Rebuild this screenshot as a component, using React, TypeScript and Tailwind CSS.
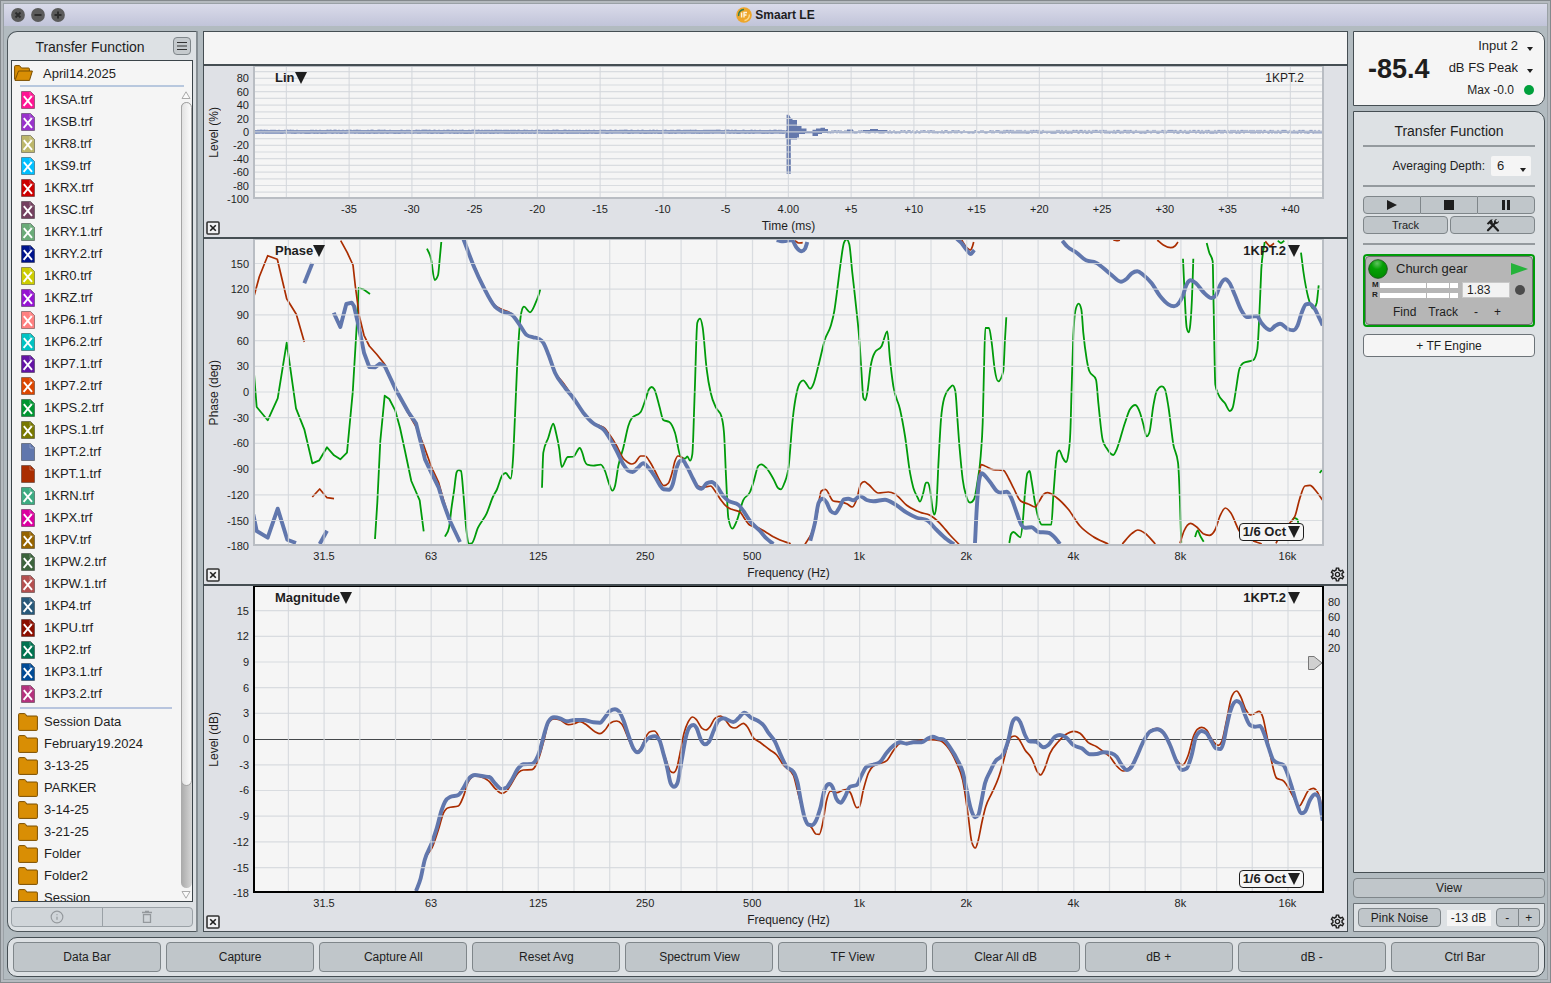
import type { ReactNode } from "react";
import { Info } from "lucide-react";
import { MdOutlineSettings } from "react-icons/md";

/* ---------- geometry of the traces ---------- */

type Part = [number, number, string];

/** Flattens tiles of samples (three units per plot unit) into plot points. */
function samples(parts: Part[]): [number, number][] {
  return parts.flatMap(([ox, oy, pts]) =>
    pts
      .trim()
      .split(/\s+/)
      .map((pair): [number, number] => {
        const [x, y] = pair.split(",").map(Number);
        return [ox + x / 3, oy + y / 3];
      }),
  );
}

/** Straight segments, for the widely spaced low-frequency bins. */
function straight(...parts: Part[]): string {
  return "M" + samples(parts).map(([x, y]) => `${x.toFixed(1)} ${y.toFixed(1)}`).join("L");
}

/** Monotone cubic through the samples: smooth, without overshoot. */
function curve(...parts: Part[]): string {
  const p = samples(parts);
  const n = p.length;
  const slope = (i: number) => (p[i + 1][1] - p[i][1]) / (p[i + 1][0] - p[i][0] || 0.01);
  const tangent = p.map((_, i) => {
    if (i === 0) return slope(0);
    if (i === n - 1) return slope(n - 2);
    const h0 = p[i][0] - p[i - 1][0];
    const h1 = p[i + 1][0] - p[i][0];
    const s0 = slope(i - 1);
    const s1 = slope(i);
    const mean = (s0 * h1 + s1 * h0) / (h0 + h1);
    return (Math.sign(s0) + Math.sign(s1)) * Math.min(Math.abs(s0), Math.abs(s1), 0.5 * Math.abs(mean)) || 0;
  });
  let d = `M${p[0][0].toFixed(1)} ${p[0][1].toFixed(1)}`;
  for (let i = 0; i < n - 1; i++) {
    const dx = (p[i + 1][0] - p[i][0]) / 3;
    d += `C${(p[i][0] + dx).toFixed(1)} ${(p[i][1] + dx * tangent[i]).toFixed(1)} ${(p[i + 1][0] - dx).toFixed(1)} ${(p[i + 1][1] - dx * tangent[i + 1]).toFixed(1)} ${p[i + 1][0].toFixed(1)} ${p[i + 1][1].toFixed(1)}`;
  }
  return d;
}

const P1 = (s: string): Part => [250, 236, s];
const P2 = (s: string): Part => [600, 236, s];
const P3 = (s: string): Part => [960, 236, s];
const M1 = (s: string): Part => [250, 660, s];
const M2 = (s: string): Part => [610, 660, s];
const M3 = (s: string): Part => [960, 580, s];

const phaseGreen = [
  straight(P1("11,400 15,450 20,513 53,553 83,487 110,320 138,517 163,580 187,682 208,673 231,634 252,658 271,670 291,650 308,470 320,270 326,156 340,160 360,174")),
  straight(P1("375,909 382,800 391,615 404,479 418,489 436,524 450,575 465,645 484,735 509,793 521,886")),
  curve(P1("531,38 543,68 554,132 564,118 570,60 574,18")),
  curve(P1("585,902 597,875 604,820 612,765 620,708 626,702 633,705 640,770 649,880 656,923 665,922 684,875 710,832 730,780 740,762 757,718 767,711 782,728 789,670 795,540 801,400 809,270 815,225 822,212 840,229 857,200 865,180 871,160")),
  curve(
    P1("876,755 880,650 895,605 910,563 918,590 928,640 935,693 953,663 970,662 989,636 997,650 1004,675 1012,686 1030,689"),
    P2("2,686 15,705 28,745 37,764 45,750 55,690 70,635 85,570 95,547 122,528 135,495 147,460 155,453 163,460 178,510 190,552 208,558 225,590 242,662 255,668 262,661 270,674 277,655 284,470 292,260 300,248 308,275 320,400 332,470 348,515 364,540 372,590 378,720 385,845 397,878 410,855 430,792 450,768 460,740 475,690 484,685 500,697 520,728 535,757 543,760 553,742 566,690 578,550 590,470 600,440 610,433 620,445 630,458 640,445 655,390 675,310 692,270 703,225 712,160 722,80 732,20 740,10 748,25 757,110 768,210 778,310 784,400 790,485 796,493 802,470 812,390 824,350 845,330 862,286 870,370 880,450 900,520 915,600 930,710 940,755 953,785 960,797 970,770 978,740 984,740 990,760 998,820 1003,836 1009,810 1015,690 1023,550 1033,485 1050,455 1058,448 1066,465 1073,560"),
    P3("0,650 8,730 18,778 30,800 42,790 52,740 62,660 68,560 72,400 76,276 87,276 95,320 104,400 115,436 130,405 135,310 139,244"),
  ),
  curve(P3("148,921 153,895 160,888 181,904 189,850 195,770 202,712 209,705 214,730 225,800 235,845 246,866 274,866 280,780 286,700 292,650 298,643 308,665 318,678 325,655 331,590 335,450 340,300 346,225 356,203 364,220 370,290 380,370 388,405 408,431 415,500 428,612 440,637 460,657 470,640 495,560 510,520 526,507 540,530 550,565 560,601 568,590 580,510 590,465 606,451 615,460 625,510 640,625 654,680 660,800 663,900 664,920")),
  curve(P3("669,68 674,180 680,275 686,289 691,265 697,160 700,68")),
  curve(P3("740,21 748,50 758,76 761,220 766,445 775,475 795,502 810,525 818,515 828,460 838,400 850,381 880,372 892,340 898,240 904,100 914,18")),
  curve(P3("953,14 963,21 973,14")),
  curve(P3("1023,50 1030,105 1045,185 1060,218 1070,200 1076,148")),
  curve(P3("705,903 713,883 720,898 731,917")),
  curve(P3("995,856 1003,846 1012,850 1015,860")),
  straight(P3("1079,711 1086,702")),
];

const phaseRed = [
  straight(P1("10,188 28,122 53,59 82,70 110,188 139,235 163,318")),
  straight(P1("187,783 209,759 231,785 252,788")),
  straight(P1("272,14 292,50 309,87 316,150 328,240 342,298 358,330 380,355 404,385 436,460 475,532 498,572 520,625 545,695 566,740 580,790 600,855 630,915")),
  curve(
    P1("640,10 672,88 700,150 735,208 755,220 785,234 810,268 830,297 850,304 865,308 880,320 895,355 915,408 940,441 970,485 1000,530 1030,562"),
    P2("0,569 12,575 28,595 50,630 68,665 82,678 95,684 105,680 122,660 135,660 150,678 165,705 180,735 192,749 205,742 215,715 225,675 234,660 243,662 260,690 280,730 295,750 310,754 332,750 345,765 365,795 380,812 395,820 420,828 435,850 450,868 475,875 500,890 520,902 540,912 572,923"),
  ),
  curve(P2("615,925 635,890 650,840 664,765 676,760 700,795 720,798 740,803 757,813 770,790 782,745 793,737 805,745 835,771 865,768 885,774 920,808 960,829 990,838 1020,862 1050,897 1077,925")),
  curve(P2("585,14 596,21 608,20")),
  curve(P3("5,12 20,35 30,42 37,32 41,18")),
  curve(P3("460,12 470,14 480,12")),
  curve(P3("592,12 610,27 632,35 645,30 654,18")),
  curve(P3("916,16 930,30 942,22")),
  curve(P3("45,905 55,760 63,686 75,690 100,701 130,703 145,725 160,755 182,795 205,804 225,813 238,795 250,776 262,770 290,785 325,820 360,870 400,902 445,924")),
  curve(P3("487,924 515,893 533,882 555,892 586,924")),
  curve(P3("660,922 672,885 692,862 710,873 730,893 748,898 765,882 780,840 796,816 812,830 838,885 870,910 905,924")),
  curve(P3("948,922 970,880 990,860 1005,840 1020,785 1035,750 1050,748 1068,765 1088,793")),
];

const phaseBlue = [
  straight(P1("10,835 20,885 53,905 83,818 112,911 138,921")),
  straight(P1("209,924 231,884")),
  straight(P1("163,142 187,82")),
  straight(P1("251,230 271,273 289,204 305,200 312,210 328,280 342,350 358,393 375,394 390,383 404,390 436,458 475,528 498,562 510,610 525,670 545,712 566,755 580,800 600,855 630,918")),
  curve(
    P1("640,8 672,92 700,152 735,212 755,226 785,236 810,268 830,297 850,304 865,308 880,320 895,355 915,410 945,455 970,486 1000,530 1030,562"),
    P2("0,573 10,580 28,605 50,645 70,685 85,704 98,708 112,697 130,682 145,695 165,722 180,748 190,760 208,761 218,745 230,695 240,675 248,673 260,690 280,730 295,755 305,758 320,742 335,738 350,750 370,780 385,794 415,806 435,832 450,855 480,885 500,908 520,924"),
  ),
  curve(P2("631,914 645,860 656,800 668,788 680,800 692,825 705,832 718,815 732,790 745,788 760,793 780,780 800,792 820,796 855,791 885,805 920,830 950,845 980,852 1010,882 1040,910 1062,925")),
  curve(P2("530,12 545,16 560,14 575,12 590,35 605,46 615,38 622,18")),
  curve(P3("-10,8 5,22 20,42 32,54 43,42")),
  curve(P3("45,921 50,820 58,730 65,712 80,725 95,745 110,765 122,770 140,767 152,782 170,830 185,868 195,875 215,874 235,888 265,890 280,900 300,924")),
  curve(P3("307,14 320,30 350,50 378,73 408,80 450,113 483,137 500,128 515,112 532,106 550,117 575,142 600,180 625,205 642,211 655,203 668,180 680,145 692,133 708,142 730,168 755,186 768,178 780,148 796,130 808,140 825,178 845,225 860,243 890,240 905,262 930,282 945,270 960,263 985,280 1000,283 1012,270 1025,230 1038,205 1048,203 1062,215 1075,240 1088,268")),
];

const magRed = [
  curve(
    M1("498,693 512,655 524,602 547,562 565,510 580,460 595,443 625,438 640,410 655,365 675,348 700,353 715,362 735,385 755,400 770,393 785,370 805,338 820,330 845,329 858,315 868,290 882,240 895,190 912,177 930,180 955,194 970,192 990,185 1010,195 1035,215 1050,221 1065,210 1080,190"),
    M2("20,183 35,192 55,235 70,268 82,274 95,260 108,230 120,215 132,213 145,228 158,270 170,305 180,332 190,338 200,325 210,280 222,220 235,185 248,171 260,180 275,204 288,210 300,200 315,175 332,168 345,178 362,200 375,204 400,190 412,200 430,233 450,247 480,270 500,285 520,315 550,345 563,395 575,440 585,480 605,503 618,522 628,523 638,490 650,420 662,393 680,398 700,390 712,388 722,400 740,443 748,440 760,390 775,340 790,318 812,310 830,302 850,272 870,250 900,247 930,241 960,239 990,242 1010,258 1040,310 1058,360 1075,470 1085,545"),
    M3("46,804 55,780 65,730 77,680 95,640 115,595 130,545 145,490 155,470 165,468 175,475 195,510 215,535 232,575 242,585 252,570 270,520 295,485 315,465 342,454 360,460 385,488 410,500 430,515 450,530 470,558 490,573 500,570 515,555 530,530 550,485 570,452 590,445 610,458 630,495 650,540 668,555 685,525 700,470 712,448 725,442 740,450 755,478 775,496 785,485 800,420 815,350 830,333 842,350 858,390 872,405 885,400 897,394 908,410 920,465 935,545 950,595 970,602 980,615 1000,650 1018,678 1030,660 1045,632 1060,625 1072,635 1083,670 1088,715"),
  ),
];

const magBlue = [
  curve(
    M1("498,693 512,655 524,600 545,550 560,505 575,450 585,425 600,411 625,405 640,385 655,358 675,345 700,349 718,351 735,370 755,387 770,382 785,360 805,325 820,313 845,312 858,300 870,270 882,225 895,185 912,172 930,175 950,184 975,180 1000,180 1030,187 1050,188 1065,172 1080,153"),
    M2("15,148 25,152 40,180 55,225 70,265 82,277 92,270 105,245 120,232 135,229 148,240 160,280 172,325 182,370 192,380 202,370 215,300 228,230 240,200 250,195 260,205 272,238 285,253 297,245 312,210 325,182 340,175 370,186 385,175 403,158 425,174 445,183 460,195 475,218 495,245 510,280 530,320 550,335 563,370 572,420 583,470 595,494 605,496 618,482 632,440 645,385 658,372 668,382 680,418 692,428 705,410 720,380 740,375 755,345 770,320 790,314 810,306 830,278 850,257 870,247 890,251 910,247 935,247 955,235 968,230 985,236 1000,238 1020,262 1045,305 1058,335 1070,390 1082,445"),
    M3("45,712 55,705 62,675 75,610 90,575 105,545 130,522 145,480 158,425 168,415 180,425 195,465 208,484 228,485 250,502 265,495 285,470 300,465 318,472 340,495 365,505 390,523 410,522 430,517 455,520 470,530 485,555 500,570 515,560 530,530 550,485 570,455 592,448 610,458 630,495 650,545 665,570 680,565 695,525 708,470 725,453 740,460 755,485 768,505 782,507 790,490 800,440 812,390 830,363 842,370 855,405 870,435 885,440 900,438 910,455 925,500 940,540 955,550 970,555 980,575 995,620 1010,670 1025,700 1035,695 1050,660 1065,643 1075,650 1083,690 1088,722"),
  ),
];

/** Noise floor of the impulse response as a run of vertical bars. */
function noiseFloor(from: number, to: number, base: number, jitter: number): string {
  let seed = 7;
  let d = "";
  for (let x = from; x < to; x += 1) {
    seed = (seed * 48271) % 2147483647;
    const r = seed / 2147483647;
    const up = base + (r > 0.6 ? jitter : 0);
    const down = base + (r < 0.35 ? jitter : 0);
    d += `M${x} ${131.8 - up}V${131.8 + down}`;
  }
  return d;
}

/* ---------- axes ---------- */

const LEFT = 253;
const WIDTH = 1071;

type Tick = { at: number; text: string };

const range = (n: number) => Array.from({ length: n }, (_, i) => i);

const freqTicks: Tick[] = ["31.5", "63", "125", "250", "500", "1k", "2k", "4k", "8k", "16k"].map((text, i) => ({
  text,
  at: 324 + i * 107.05,
}));
const freqGrid = range(29).map((i) => 288.4 + i * 35.7);

const timeTicks: Tick[] = range(16).map((i) => {
  const ms = (i - 7) * 5;
  return { text: ms === 0 ? "4.00" : ms > 0 ? `+${ms}` : `${ms}`, at: 788.3 + (i - 7) * 62.75 };
});
const timeGrid = range(17).map((i) => 286.4 + i * 62.75);

const linTicks: Tick[] = range(10).map((i) => ({ text: `${80 - i * 20}`, at: 78.3 + i * 13.4 }));
const linGrid = range(19).map((i) => 71.6 + i * 6.7);

const phaseTicks: Tick[] = range(12).map((i) => ({ text: `${150 - i * 30}`, at: 263.5 + i * 25.7 }));
const phaseGrid = range(11).map((i) => 263.5 + i * 25.7);

const magTicks: Tick[] = range(12).map((i) => ({ text: `${15 - i * 3}`, at: 610.5 + i * 25.7 }));
const magGrid = range(11)
  .filter((i) => i !== 5)
  .map((i) => 610.6 + i * 25.7);
const cohTicks: Tick[] = range(4).map((i) => ({ text: `${80 - i * 20}`, at: 602 + i * 15.4 }));

/* ---------- small pieces ---------- */

const Down = ({ className }: { className: string }) => (
  <svg viewBox="0 0 11 11" preserveAspectRatio="none" className={className} aria-hidden="true">
    <path d="M0 0H11L5.5 11Z" fill="#1e1e1e" />
  </svg>
);

const CloseBox = () => (
  <svg viewBox="0 0 14 14" className="size-3.5" aria-hidden="true">
    <rect x="1" y="1" width="12" height="12" rx="1" fill="#f0f0f2" stroke="#333" strokeWidth="1.6" />
    <path d="M4.2 4.2l5.6 5.6M9.8 4.2l-5.6 5.6" stroke="#1e1e1e" strokeWidth="1.6" />
  </svg>
);

const FileIcon = ({ color, plain }: { color: string; plain?: boolean }) => (
  <svg viewBox="0 0 14 18" className="h-[18px] w-3.5 shrink-0" aria-hidden="true">
    <path d="M.5 .5H9.5L13.500 4.500V17.500H.5Z" fill={color} stroke="#000" strokeOpacity=".35" />
    <path d="M9 1V5H13" fill={color} stroke="#fff" strokeOpacity=".35" strokeWidth=".8" />
    {!plain && <path d="M2.800 5.200L11 14.800M10.800 5.200L2.600 14.800" stroke="#fff" strokeWidth="1.900" />}
  </svg>
);

const FolderIcon = () => (
  <svg viewBox="0 0 20 18" className="h-[18px] w-5 shrink-0" aria-hidden="true">
    <path
      d="M.6 1.500Q.6.600 1.500.600H6.500Q7.400.600 7.800 1.500L8.600 3H18.500Q19.400 3 19.400 4V16.500Q19.400 17.400 18.500 17.400H1.500Q.6 17.400.6 16.500Z"
      fill="#d98e04"
      stroke="#7a4e00"
      strokeWidth="1"
    />
  </svg>
);

const OpenFolderIcon = () => (
  <svg viewBox="0 0 19 16" className="h-4 w-[19px] shrink-0" aria-hidden="true">
    <path d="M.6 14.500V1.500Q.6.600 1.500.600H5.500L7.500 3H14.500Q15.400 3 15.400 4V6" fill="#d98e04" stroke="#7a4e00" />
    <path d="M4.500 6H18.400L15.500 15.400H1Z" fill="#d98e04" stroke="#7a4e00" strokeLinejoin="round" />
  </svg>
);

const flatButton = "flex items-center justify-center border border-[#7f868a] bg-[#c0c6ca] text-[#1e1e1e]";

/* ---------- charts ---------- */

type ChartProps = {
  top: number;
  height: number;
  grow: string;
  yTitle: string;
  xTitle: string;
  yTicks: Tick[];
  xTicks: Tick[];
  xGrid: number[];
  yGrid: number[];
  frame: string;
  title: string;
  trace: ReactNode;
  source?: boolean;
  settings?: boolean;
  rightTicks?: Tick[];
  children: ReactNode;
};

function Chart(c: ChartProps) {
  return (
    <section aria-label={c.title} className={`grid min-h-0 grid-cols-[49px_minmax(0,1fr)_23px] grid-rows-[minmax(0,1fr)_38px] bg-[#dfe1e6] ${c.grow}`}>
      <div className="relative flex items-center pl-1">
        <span className="rotate-180 text-xs leading-3 [writing-mode:vertical-rl]">{c.yTitle}</span>
        {c.yTicks.map((t) => (
          <span key={t.text} className="absolute right-1 -translate-y-1/2 text-[11px] leading-3" style={{ top: `${((t.at - c.top) / c.height) * 100}%` }}>
            {t.text}
          </span>
        ))}
      </div>
      <div className="relative min-w-0 bg-[#f5f5f5]">
        <svg viewBox={`${LEFT} ${c.top} ${WIDTH} ${c.height}`} preserveAspectRatio="none" className="absolute inset-0 size-full" aria-hidden="true">
          {c.children}
          <g stroke="#d3d7dc" strokeOpacity=".85" strokeWidth="1.200">
            {c.xGrid.map((x) => (
              <path key={x} d={`M${x} ${c.top}v${c.height}`} />
            ))}
            {c.yGrid.map((y) => (
              <path key={y} d={`M${LEFT} ${y}h${WIDTH}`} />
            ))}
          </g>
        </svg>
        <div className={`pointer-events-none absolute inset-0 border-2 border-t ${c.frame}`} />
        <button type="button" className="absolute top-1 left-[22px] flex h-4 items-center text-[13px] font-bold">
          {c.title}
          <Down className="size-3" />
        </button>
        <div className="absolute top-1 right-5 flex h-4 items-center">{c.trace}</div>
        {c.source && (
          <button type="button" className="absolute right-5 bottom-[5px] flex h-[18px] items-center rounded border border-[#1e1e1e] bg-[#f5f5f5] px-[3px] text-[13px] font-bold">
            1/6 Oct
            <Down className="ml-0.5 size-3" />
          </button>
        )}
        {c.rightTicks && (
          <svg viewBox="0 0 15 14" className="absolute top-[70px] right-px h-3.5 w-[15px]" aria-hidden="true">
            <path d="M.5 .5H6L14 7L6 13.500H.5Z" fill="#d0d0d0" stroke="#777" />
          </svg>
        )}
      </div>
      <div className="relative">
        {c.rightTicks?.map((t) => (
          <span key={t.text} className="absolute left-1 -translate-y-1/2 text-[11px] leading-3" style={{ top: `${((t.at - c.top) / c.height) * 100}%` }}>
            {t.text}
          </span>
        ))}
      </div>
      <div className="flex items-end pb-0.5 pl-0.5">
        <button type="button" aria-label={`Close ${c.title}`}>
          <CloseBox />
        </button>
      </div>
      <div className="relative flex justify-center pt-[19px]">
        {c.xTicks.map((t) => (
          <span key={t.text} className="absolute top-1 -translate-x-1/2 text-[11px] leading-3" style={{ left: `${((t.at - LEFT) / WIDTH) * 100}%` }}>
            {t.text}
          </span>
        ))}
        <span className="text-xs">{c.xTitle}</span>
      </div>
      <div className="flex items-end justify-end pr-px pb-px">
        {c.settings && (
          <button type="button" aria-label={`${c.title} settings`}>
            <MdOutlineSettings className="size-[17px]" />
          </button>
        )}
      </div>
    </section>
  );
}

const Lines = ({ paths, color, width }: { paths: string[]; color: string; width: number }) => (
  <g fill="none" stroke={color} strokeWidth={width} strokeLinejoin="round">
    {paths.map((d) => (
      <path key={d} d={d} />
    ))}
  </g>
);

const TraceButton = () => (
  <button type="button" className="mr-1 flex items-center text-[13px] font-bold">
    1KPT.2
    <Down className="ml-0.5 size-3" />
  </button>
);

/* ---------- data ---------- */

const files: [string, string][] = [
  ["1KSA.trf", "#ff1493"],
  ["1KSB.trf", "#9932cc"],
  ["1KR8.trf", "#bdb76b"],
  ["1KS9.trf", "#00bfff"],
  ["1KRX.trf", "#cd0000"],
  ["1KSC.trf", "#74405f"],
  ["1KRY.1.trf", "#6aab78"],
  ["1KRY.2.trf", "#00148c"],
  ["1KR0.trf", "#cdcd00"],
  ["1KRZ.trf", "#9614d2"],
  ["1KP6.1.trf", "#ff8080"],
  ["1KP6.2.trf", "#00c3c3"],
  ["1KP7.1.trf", "#6414a5"],
  ["1KP7.2.trf", "#dc4600"],
  ["1KPS.2.trf", "#009632"],
  ["1KPS.1.trf", "#787800"],
  ["1KPT.2.trf", "#6177ad"],
  ["1KPT.1.trf", "#aa2d00"],
  ["1KRN.trf", "#3cab82"],
  ["1KPX.trf", "#dc00a0"],
  ["1KPV.trf", "#966400"],
  ["1KPW.2.trf", "#3c643c"],
  ["1KPW.1.trf", "#b45050"],
  ["1KP4.trf", "#28597a"],
  ["1KPU.trf", "#8c0f00"],
  ["1KP2.trf", "#007350"],
  ["1KP3.1.trf", "#004b96"],
  ["1KP3.2.trf", "#b4327d"],
];

const folders = ["Session Data", "February19.2024", "3-13-25", "PARKER", "3-14-25", "3-21-25", "Folder", "Folder2", "Session"];

const commands = ["Data Bar", "Capture", "Capture All", "Reset Avg", "Spectrum View", "TF View", "Clear All dB", "dB +", "dB -", "Ctrl Bar"];

/* ---------- panels ---------- */

function TitleBar() {
  const dots: [string, string][] = [
    ["Close", "M4.500 4.500l5 5M9.500 4.500l-5 5"],
    ["Minimize", "M3.500 7h7"],
    ["Zoom", "M3.500 7h7M7 3.500v7"],
  ];
  return (
    <header className="grid h-[22px] shrink-0 grid-cols-[1fr_auto_1fr] items-center bg-linear-to-b from-[#dadbea] to-[#c1c4d9]">
      <div className="flex gap-1.5 pl-[7px]">
        {dots.map(([name, d]) => (
          <button key={name} type="button" aria-label={name}>
            <svg viewBox="0 0 14 14" className="size-3.5" aria-hidden="true">
              <circle cx="7" cy="7" r="6.900" fill="#5b5b5b" />
              <path d={d} stroke="#2c2c2c" strokeWidth="1.900" />
            </svg>
          </button>
        ))}
      </div>
      <h1 className="flex items-center gap-[3px] text-xs font-bold">
        <svg viewBox="0 0 16 16" className="size-4" aria-hidden="true">
          <circle cx="8" cy="8" r="7.800" fill="#eea62a" />
          <path d="M2.600 9A5.600 5.600 0 0 1 8 2.500" fill="none" stroke="#3b7d4e" strokeWidth="1.600" />
          <path d="M13.400 7.500A5.600 5.600 0 0 1 8.500 13.500" fill="none" stroke="#fbd98a" strokeWidth="1.400" />
          <path d="M5.600 5.500v5M8 10.500v-5h3M8 8h2.500" fill="none" stroke="#fdf3dc" strokeWidth="1.400" />
        </svg>
        Smaart LE
      </h1>
      <span />
    </header>
  );
}

function Library() {
  return (
    <aside className="flex w-[191px] shrink-0 flex-col rounded-l-[10px] border border-r-2 border-[#4d565b] border-r-[#858d92] bg-[#dde1e4] px-[3px] pb-1">
      <div className="flex h-7 shrink-0 items-center">
        <h2 className="flex-1 pt-0.5 pr-1 text-center text-sm">Transfer Function</h2>
        <button type="button" aria-label="Menu" className="mr-0.5 flex size-[18px] items-center justify-center rounded border border-[#7f868a] bg-[#c5cacd]">
          <svg viewBox="0 0 12 10" className="h-2.5 w-3" aria-hidden="true">
            <path d="M1 1.500h10M1 5h10M1 8.500h10" stroke="#333" strokeWidth="1.200" />
          </svg>
        </button>
      </div>
      <div className="flex min-h-0 flex-1 flex-col border border-[#3b4449] bg-[#f5f5f5]">
        <button type="button" className="flex h-6 shrink-0 items-center gap-2.5 pl-0.5 text-left text-[13px]">
          <OpenFolderIcon />
          <span className="pt-0.5">April14.2025</span>
        </button>
        <hr className="mr-2 ml-2 h-0.5 shrink-0 border-0 bg-[#b8c8de]" />
        <div className="flex min-h-0 flex-1">
          <div className="min-w-0 flex-1 overflow-hidden pt-0.5">
            <ul>
              {files.map(([name, color]) => (
                <li key={name}>
                  <button type="button" className="flex h-[22px] w-full items-center gap-[9px] pl-[9px] text-left text-[13px]">
                    <FileIcon color={color} plain={name.startsWith("1KPT")} />
                    {name}
                  </button>
                </li>
              ))}
            </ul>
            <hr className="mt-0.5 mr-2 mb-0.5 ml-2 h-0.5 border-0 bg-[#b8c5de]" />
            <ul>
              {folders.map((name) => (
                <li key={name}>
                  <button type="button" className="flex h-[22px] w-full items-center gap-1.5 pl-1.5 text-left text-[13px]">
                    <FolderIcon />
                    {name}
                  </button>
                </li>
              ))}
            </ul>
          </div>
          <div className="flex w-3 flex-col items-center gap-[3px] pt-1 pb-0.5" aria-hidden="true">
            <svg viewBox="0 0 10 8" className="h-2 w-2.5 shrink-0">
              <path d="M1 7.500H9L5 .800Z" fill="#fafafa" stroke="#aaa" />
            </svg>
            <div className="w-[11px] flex-1 rounded-full bg-linear-to-r from-[#a9a9a9] to-[#d6d6d6]">
              <div className="h-[87%] rounded-full border border-[#a5a5a5] bg-linear-to-r from-[#e2e2e2] to-[#fbfbfb]" />
            </div>
            <svg viewBox="0 0 10 8" className="h-2 w-2.5 shrink-0">
              <path d="M1 .500H9L5 7.200Z" fill="#fafafa" stroke="#aaa" />
            </svg>
          </div>
        </div>
      </div>
      <div className="mt-[5px] flex h-5 shrink-0 overflow-hidden rounded-sm border border-[#9aa1a6] bg-[#d0d5d9] text-[#94999d]">
        <button type="button" aria-label="Info" className="flex flex-1 items-center justify-center border-r border-[#9aa1a6]">
          <Info className="size-3.5" />
        </button>
        <button type="button" aria-label="Delete" className="flex flex-1 items-center justify-center">
          <svg viewBox="0 0 12 14" className="h-3.5 w-3" fill="none" stroke="currentColor" strokeWidth="1.300" aria-hidden="true">
            <path d="M1 2.500h10M4 1.500h4M2.500 4.700h7v7.600h-7Z" />
          </svg>
        </button>
      </div>
    </aside>
  );
}

const Meter = ({ name }: { name: string }) => (
  <div className="flex items-center gap-px">
    <span className="w-[7px] text-[8px] leading-[10px] font-bold">{name}</span>
    <div className="flex h-[5px] flex-1 gap-px">
      <span className="w-[46px] bg-white" />
      <span className="flex-1 bg-white" />
      <span className="w-2 bg-white" />
    </div>
  </div>
);

function EngineCard() {
  return (
    <section aria-label="Church gear" className="mt-[9px] rounded border-2 border-[#009b0a]">
      <div className="rounded-sm border border-[#6f6f6f] bg-[#b6b6b6] px-0.5 pt-0.5 pb-px">
        <div className="flex items-center">
          <svg viewBox="0 0 20 20" className="size-5" aria-hidden="true">
            <defs>
              <radialGradient id="led" cx=".45" cy=".2" r=".8">
                <stop offset="0" stopColor="#5fc35f" />
                <stop offset=".4" stopColor="#05a005" />
                <stop offset="1" stopColor="#008c00" />
              </radialGradient>
            </defs>
            <circle cx="10" cy="10" r="9.300" fill="url(#led)" stroke="#1d5f1d" />
          </svg>
          <span className="ml-2 flex-1 text-[13px]">Church gear</span>
          <button type="button" aria-label="Run engine" className="mr-0.5">
            <svg viewBox="0 0 17 12" className="h-3 w-[17px]" aria-hidden="true">
              <path d="M0 0L17 6L0 12Z" fill="#25b33a" />
            </svg>
          </button>
        </div>
        <div className="flex h-[22px] items-center gap-1 pl-1">
          <div className="w-[86px]">
            <Meter name="M" />
            <Meter name="R" />
          </div>
          <input aria-label="Delay (ms)" defaultValue="1.83" className="h-4 w-12 border border-[#c8c8c8] bg-[#f2f2f2] px-1 text-xs" />
          <span className="ml-px size-2.5 rounded-full bg-[#4b4b4b]" />
        </div>
        <div className="flex h-[22px] items-center pl-[25px] text-xs">
          <button type="button">Find</button>
          <button type="button" className="ml-3">Track</button>
          <button type="button" className="ml-4" aria-label="Decrease delay">-</button>
          <button type="button" className="ml-4" aria-label="Increase delay">+</button>
        </div>
      </div>
    </section>
  );
}

function Picker({ label, options }: { label: string; options: string[] }) {
  return (
    <div className="relative flex h-[22px] items-center">
      <select aria-label={label} className="field-sizing-content appearance-none bg-transparent pr-4 text-[13px] leading-4">
        {options.map((o) => (
          <option key={o}>{o}</option>
        ))}
      </select>
      <Down className="pointer-events-none absolute right-px bottom-1.5 h-1 w-1.5" />
    </div>
  );
}

const Rule = () => <hr className="h-0.5 border-0 bg-[#949a9e]" />;

function Controls() {
  return (
    <aside className="flex w-48 shrink-0 flex-col gap-[5px]">
      <section aria-label="Input level" className="flex h-[75px] items-center justify-between rounded-r-[10px] border border-[#454e53] bg-[#f5f5f5] pr-2.5 pl-3.5">
        <span className="text-[27px] leading-8 font-bold">-85.4</span>
        <div className="flex flex-col items-end pb-0.5">
          <Picker label="Input" options={["Input 2", "Input 1"]} />
          <Picker label="Scale" options={["dB FS Peak", "dB SPL"]} />
          <div className="flex h-[22px] items-center gap-2.5 text-xs">
            Max -0.0
            <span className="size-2.5 rounded-full bg-[#00a03c]" />
          </div>
        </div>
      </section>
      <section className="min-h-0 flex-1 rounded-tr-[10px] border border-[#454e53] bg-[#dde1e4] px-[9px]">
        <h2 className="pt-3 pb-1.5 text-center text-sm leading-[15px]">Transfer Function</h2>
        <Rule />
        <div className="flex h-[38px] items-center justify-end gap-1.5 pr-1 text-xs">
          <label htmlFor="depth">Averaging Depth:</label>
          <div className="relative">
            <select id="depth" className="h-5 w-10 appearance-none rounded-xs bg-[#f5f5f5] pl-1.5 text-[13px]">
              <option>6</option>
              <option>8</option>
            </select>
            <Down className="pointer-events-none absolute right-[5px] bottom-1 h-1 w-1.5" />
          </div>
        </div>
        <Rule />
        <div className="mt-[9px] flex h-[18px]">
          <button type="button" aria-label="Play" className={`${flatButton} flex-1 rounded-l`}>
            <svg viewBox="0 0 10 10" className="size-2.5" aria-hidden="true"><path d="M0 0L10 5L0 10Z" fill="#1e1e1e" /></svg>
          </button>
          <button type="button" aria-label="Stop" className={`${flatButton} flex-1 border-x-0`}>
            <svg viewBox="0 0 10 10" className="size-2.5" aria-hidden="true"><path d="M0 0H10V10H0Z" fill="#1e1e1e" /></svg>
          </button>
          <button type="button" aria-label="Pause" className={`${flatButton} flex-1 rounded-r`}>
            <svg viewBox="0 0 8 10" className="h-2.5 w-2" aria-hidden="true"><path d="M0 0H3V10H0ZM5 0H8V10H5Z" fill="#1e1e1e" /></svg>
          </button>
        </div>
        <div className="mt-0.5 mb-[9px] flex h-[18px] gap-0.5">
          <button type="button" className={`${flatButton} flex-1 rounded text-[11px]`}>Track</button>
          <button type="button" aria-label="Tools" className={`${flatButton} flex-1 rounded`}>
            <svg viewBox="0 0 14 14" className="size-3.5" aria-hidden="true">
              <path d="M5 5L12 12.500" stroke="#1e1e1e" strokeWidth="2.200" strokeLinecap="round" />
              <path d="M.8 5.600L3 3.200Q4.200 1.300 6.800 1.200L5.900 2.500L7 4.300L4.600 6.500L3.500 5.400L2.200 6.800Z" fill="#1e1e1e" />
              <path d="M9.600 4.600L2 12.300" stroke="#1e1e1e" strokeWidth="2.200" strokeLinecap="round" />
              <path d="M12.900 2.700L11.300 4.300L9.900 3.900L9.600 2.600L11.200 1A3.100 3.100 0 0 0 8 4.700L9.300 6A3.100 3.100 0 0 0 12.900 2.700Z" fill="#1e1e1e" />
            </svg>
          </button>
        </div>
        <Rule />
        <EngineCard />
        <button type="button" className="mt-[7px] h-[23px] w-full rounded border border-[#6c7378] bg-[#f5f5f5] text-xs">+ TF Engine</button>
      </section>
      <button type="button" className={`${flatButton} h-5 shrink-0 rounded text-xs`}>View</button>
      <section aria-label="Signal generator" className="flex h-[29px] shrink-0 items-center justify-between rounded-br-[10px] border border-[#6c7378] bg-[#dde1e4] px-1">
        <button type="button" className={`${flatButton} h-[19px] w-[83px] rounded text-xs`}>Pink Noise</button>
        <input aria-label="Generator level" defaultValue="-13 dB" className="h-4 w-11 bg-[#f5f5f5] text-center text-xs" />
        <div className="flex h-[19px] w-11 text-xs">
          <button type="button" aria-label="Lower level" className={`${flatButton} flex-1 rounded-l`}>-</button>
          <button type="button" aria-label="Raise level" className={`${flatButton} flex-1 rounded-r border-l-0`}>+</button>
        </div>
      </section>
    </aside>
  );
}

export default function App() {
  return (
    <div className="h-screen min-h-[700px] w-full min-w-[1100px] border border-[#84898d] bg-[#b5babf] p-0.5 font-['Liberation_Sans',Arial,sans-serif] text-[#1e1e1e]">
      <div className="flex h-full flex-col border border-[#9aa1a6] bg-[#b2bbc0]">
        <TitleBar />
        <div className="flex min-h-0 flex-1 flex-col gap-[5px] pt-[5px] pr-0.5 pb-0.5 pl-[3px]">
          <div className="flex min-h-0 flex-1 gap-[5px]">
            <Library />
            <main className="flex min-w-0 flex-1 flex-col gap-0.5 border border-[#454e53] bg-[#454e53]">
              <div className="h-8 shrink-0 bg-[#f5f5f5]" />
              <Chart
                title="Lin" grow="flex-[171_1_0px]" top={66} height={133}
                yTitle="Level (%)" xTitle="Time (ms)"
                yTicks={linTicks} xTicks={timeTicks} xGrid={timeGrid} yGrid={linGrid}
                frame="border-[#b9bdc3]" trace={<span className="text-xs">1KPT.2</span>}
              >
                <path d="M254 131.800H785" stroke="#8496c0" strokeWidth="3.200" />
                <path d="M785 131.800H1323" stroke="#8496c0" strokeWidth="1.800" />
                <path d={noiseFloor(254, 785, 1.5, 0.7)} stroke="#7487b6" strokeWidth="1" />
                <path d={noiseFloor(828, 1000, 0.5, 1.2)} stroke="#7487b6" strokeWidth="1" />
                <path d={noiseFloor(1000, 1323, 1, 0.9)} stroke="#7487b6" strokeWidth="1" />
                <path
                  d="M785.500 130H786.600V114.700H789L790.800 118H792.500V120H797V126H801.500V128.500H806.500V131H812.500V129.800H816V128.600H820.500V127.800H825V129H828V133H822V134H818V136H812.500V133.200H805V134H799V137.500H797V139.500H790.800V173.700H786.600V138H785.500Z"
                  fill="#6478ac"
                />
                <path d="M847 129.500h6v2h-6zM863 130h24v2h-24zM870 129h8v2h-8z" fill="#6478ac" />
              </Chart>
              <Chart
                title="Phase" grow="flex-[345_1_0px]" top={239} height={307}
                yTitle="Phase (deg)" xTitle="Frequency (Hz)"
                yTicks={phaseTicks} xTicks={freqTicks} xGrid={freqGrid} yGrid={phaseGrid}
                frame="border-[#b9bdc3]" trace={<TraceButton />} source settings
              >
                <Lines paths={phaseGreen} color="#009b0a" width={1.8} />
                <Lines paths={phaseRed} color="#aa2d00" width={1.7} />
                <Lines paths={phaseBlue} color="#6177ad" width={3.9} />
              </Chart>
              <Chart
                title="Magnitude" grow="flex-[345_1_0px]" top={586} height={307}
                yTitle="Level (dB)" xTitle="Frequency (Hz)"
                yTicks={magTicks} xTicks={freqTicks} xGrid={freqGrid} yGrid={magGrid}
                frame="border-black" trace={<TraceButton />} source settings rightTicks={cohTicks}
              >
                <Lines paths={["M253 739.500H1324"]} color="#45484b" width={1} />
                <Lines paths={magRed} color="#aa2d00" width={1.7} />
                <Lines paths={magBlue} color="#6177ad" width={3.9} />
              </Chart>
            </main>
            <Controls />
          </div>
          <nav aria-label="Commands" className="flex h-10 shrink-0 gap-[5px] rounded-[10px] border border-[#454e53] bg-[#dde1e4] px-[5px] py-1">
            {commands.map((name) => (
              <button key={name} type="button" className={`${flatButton} flex-1 rounded text-xs`}>
                {name}
              </button>
            ))}
          </nav>
        </div>
      </div>
    </div>
  );
}
